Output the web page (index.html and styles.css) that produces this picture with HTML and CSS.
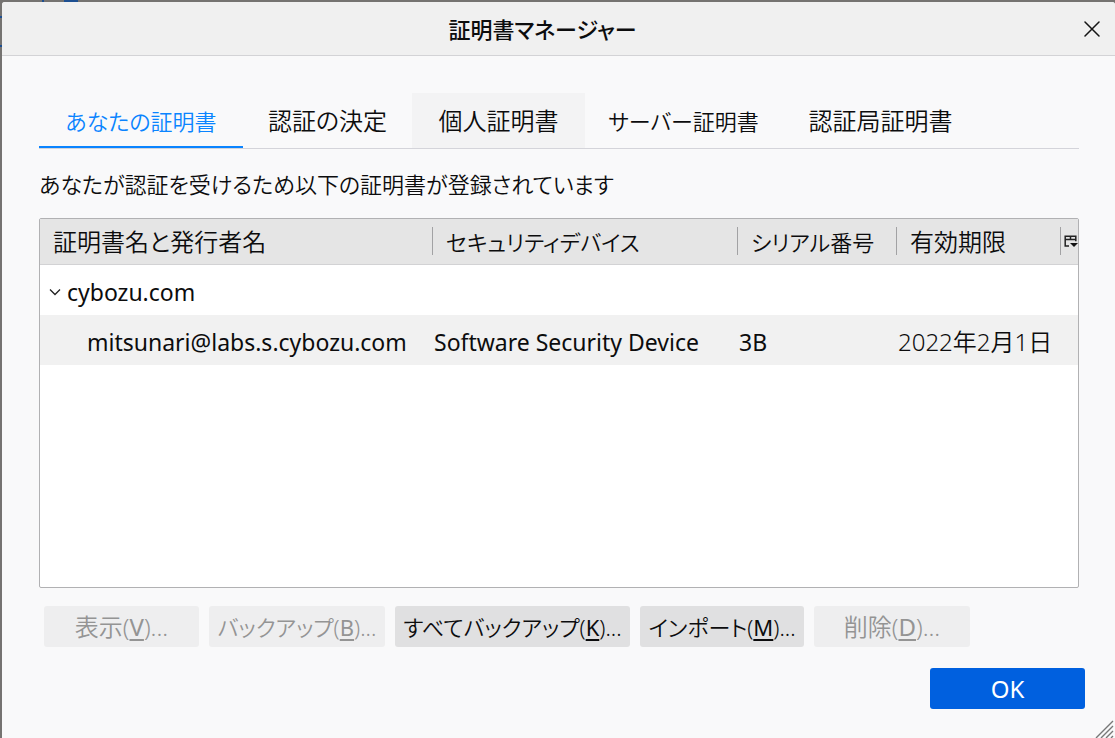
FILE: index.html
```html
<!DOCTYPE html>
<html lang="ja">
<head>
<meta charset="utf-8">
<title>証明書マネージャー</title>
<link rel="stylesheet" href="styles.css">
</head>
<body>
<div class="dialog" role="dialog" aria-labelledby="dialog-title">
  <header class="titlebar">
    <h1 class="title" id="dialog-title">証明書マネージャー</h1>
    <button class="close" type="button" aria-label="閉じる">
      <svg width="16" height="16" viewBox="0 0 16 16" fill="none" stroke="#151515" stroke-width="1.5" stroke-linecap="round"><path d="M1 1l14 14M15 1L1 15"/></svg>
    </button>
  </header>
  <main class="content">
    <div class="tabs" role="tablist">
      <button class="tab tab-selected kana" type="button" role="tab" aria-selected="true">あなたの証明書</button>
      <button class="tab" type="button" role="tab">認証の決定</button>
      <button class="tab tab-hover" type="button" role="tab">個人証明書</button>
      <button class="tab kana" type="button" role="tab">サーバー証明書</button>
      <button class="tab" type="button" role="tab">認証局証明書</button>
    </div>
    <p class="description kana">あなたが認証を受けるため以下の証明書が登録されています</p>
    <div class="tree">
      <table class="certs">
        <colgroup><col class="col-name"><col class="col-device"><col class="col-serial"><col class="col-expires"><col class="col-picker"></colgroup>
        <thead>
          <tr>
            <th scope="col"><span class="head">証明書名と発行者名</span></th>
            <th scope="col"><span class="head head-line kana">セキュリティデバイス</span></th>
            <th scope="col"><span class="head head-line kana">シリアル番号</span></th>
            <th scope="col"><span class="head head-line">有効期限</span></th>
            <th scope="col">
              <button class="picker head-line" type="button" aria-label="表示する列を選択">
                <svg width="14" height="14" viewBox="0 0 14 14" fill="none" stroke="#222" stroke-width="1.5"><path d="M5 12H1.2V2.2h10.6v5M1 5.6h11M6.5 2v4"/><path d="M6 9h8l-4 4z" fill="#111" stroke="none"/></svg>
              </button>
            </th>
          </tr>
        </thead>
        <tbody>
          <tr>
            <td colspan="5" class="group">
              <span class="group-label"><svg width="12" height="8" viewBox="0 0 12 8" fill="none" stroke="#222" stroke-width="1.3"><path d="M1 1.500l5 5 5-5"/></svg>cybozu.com</span>
            </td>
          </tr>
          <tr class="row-alt">
            <td class="child">mitsunari@labs.s.cybozu.com</td>
            <td>Software Security Device</td>
            <td>3B</td>
            <td colspan="2" class="date">2022年2月1日</td>
          </tr>
        </tbody>
      </table>
    </div>
    <div class="actions">
      <button class="btn" type="button" disabled>表示(<u>V</u>)...</button>
      <button class="btn kana" type="button" disabled>バックアップ(<u>B</u>)...</button>
      <button class="btn kana" type="button">すべてバックアップ(<u>K</u>)...</button>
      <button class="btn kana" type="button">インポート(<u>M</u>)...</button>
      <button class="btn" type="button" disabled>削除(<u>D</u>)...</button>
    </div>
  </main>
  <footer class="footer">
    <button class="btn btn-primary" type="button">OK</button>
  </footer>
  <svg class="resizer" width="20" height="18" viewBox="0 0 20 18" stroke="#777" stroke-width="1.4" fill="none"><path d="M1 18L18 1M6 18L18 6M11 18l7-7M16 18l2-2"/></svg>
</div>
</body>
</html>
```
FILE: styles.css
```css
* { box-sizing: border-box; }

body {
  margin: 0;
  min-height: 100vh;
  display: flex;
  padding: 2px 0 0 2px;
  background:
    linear-gradient(#1d4f91, #1d4f91) 0 16px / 2px 2px no-repeat,
    linear-gradient(#1d4f91, #1d4f91) 0 45px / 2px 2px no-repeat,
    linear-gradient(#1d4f91, #1d4f91) 42px 0 / 2px 2px no-repeat,
    linear-gradient(#1d4f91, #1d4f91) 64px 0 / 14px 2px no-repeat,
    #757371;
  color: #0c0c0d;
  font: 350 24px/32px "Noto Sans", "Noto Sans CJK JP", sans-serif;
  font-feature-settings: "palt";
}

button {
  font: inherit;
  font-feature-settings: inherit;
  color: inherit;
  border: 0;
  margin: 0;
  padding: 0;
  background: none;
  white-space: nowrap;
}

/* Kana-heavy labels run wider, so they are set one step smaller. */
.kana { font-size: 22px; }

.dialog {
  position: relative;
  flex: 1;
  display: flex;
  flex-direction: column;
  background: #f9f9fa;
  border-radius: 3px 3px 0 0;
  overflow: hidden;
}

.titlebar {
  display: grid;
  grid-template-columns: 14px 1fr 46px;
  align-items: center;
  height: 54px;
  background: #f0f0f0;
  border-bottom: 1px solid #d3d3d6;
}

.title {
  grid-column: 2;
  margin: 0;
  font-size: 22px;
  font-weight: 500;
  text-align: center;
}

.close {
  display: flex;
  justify-content: center;
}

.content {
  flex: 1;
  display: flex;
  flex-direction: column;
  padding: 37px 36px 0 37px;
}

.tabs {
  display: grid;
  grid-template-columns: 204fr 169fr 173fr 197fr 197fr;
  padding-right: 100px;
  border-bottom: 1px solid #d4d4da;
}

.tab {
  height: 55px;
  padding-top: 2px;
  border-bottom: 2px solid transparent;
}

.tab-selected {
  color: #0a84ff;
  border-bottom-color: #0a84ff;
}

.tab-hover {
  background: #f3f3f4;
  border-bottom-color: #f3f3f4;
}

.description {
  margin: 19px 0 18px;
}

.tree {
  flex: 1;
  background: #fff;
  border: 1px solid #b1b1b3;
  border-radius: 2px;
  overflow: hidden;
}

.certs {
  width: 100%;
  table-layout: fixed;
  border-spacing: 0;
}

.col-device { width: 305px; }
.col-serial { width: 159px; }
.col-expires { width: 164px; }
.col-picker { width: 18px; }

.certs th {
  height: 46px;
  padding: 0 0 2px;
  font-weight: inherit;
  text-align: left;
  background: #e5e5e5;
  border-bottom: 1px solid #d2d2d4;
}

.head {
  display: flex;
  align-items: center;
  height: 28px;
  padding: 2px 0 0 13px;
  white-space: nowrap;
}

.head-line { border-left: 1px solid #a2a2a4; }

.picker {
  display: flex;
  align-items: center;
  height: 28px;
  padding-left: 3px;
}

.certs td {
  height: 50px;
  padding: 4px 0 0 2px;
  font-size: 23px;
  font-weight: 400;
  white-space: nowrap;
}

.certs .group { padding-left: 9px; }
.certs .child { padding-left: 47px; }
.certs .date {
  font-size: 24px;
  font-weight: 350;
}

.group-label {
  display: flex;
  align-items: center;
  gap: 6px;
}

.row-alt { background: #f1f1f1; }

.actions {
  display: grid;
  grid-template-columns: 155fr 176fr 235fr 164fr 156fr;
  gap: 10px;
  padding: 18px 109px 0 5px;
}

.btn {
  height: 41px;
  background: #e0e0e1;
  border-radius: 3px;
}

.btn:disabled {
  background: #eeeeef;
  color: #949494;
}

.btn u {
  font-weight: 400;
  text-decoration-thickness: 2px;
  text-underline-offset: 3px;
}

.footer {
  display: flex;
  justify-content: flex-end;
  padding: 21px 30px 29px;
}

.btn-primary {
  min-width: 155px;
  background: #0060df;
  color: #fff;
  font-weight: 400;
}

.resizer {
  position: absolute;
  right: 0;
  bottom: 0;
}
```
